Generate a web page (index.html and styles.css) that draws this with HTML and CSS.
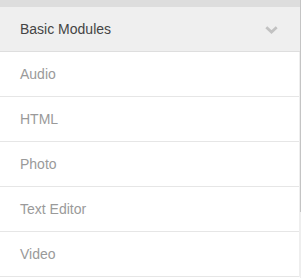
FILE: index.html
```html
<!DOCTYPE html>
<html lang="en">
<head>
    <meta charset="UTF-8">
    <title>Modules</title>
    <link rel="stylesheet" href="styles.css">
</head>
<body>
    <div class="sidebar">
        <div class="panel">
            <div class="panel-top"></div>
            <div class="group-header">
                <span>Basic Modules</span>
                <svg class="chevron" width="13" height="8" viewBox="0 0 13 8">
                    <path d="M1.3 1.2 L6.5 6 L11.7 1.2" fill="none" stroke="#c2c2c2" stroke-width="2.8"/>
                </svg>
            </div>
            <ul class="module-list">
                <li class="module-item">Audio</li>
                <li class="module-item">HTML</li>
                <li class="module-item">Photo</li>
                <li class="module-item">Text Editor</li>
                <li class="module-item">Video</li>
            </ul>
        </div>
        <div class="scrollbar">
            <div class="scroll-thumb"></div>
        </div>
    </div>
</body>
</html>
```

FILE: styles.css
```css
* {
    margin: 0;
    padding: 0;
    box-sizing: border-box;
}

body {
    font-family: 'Liberation Sans', Arial, sans-serif;
    font-size: 14px;
    background: #ffffff;
    overflow: hidden;
}

.sidebar {
    display: flex;
    width: 302px;
    height: 278px;
}

.panel {
    width: 300px;
}

.panel-top {
    height: 7px;
    background: #dddddd;
}

.group-header {
    display: flex;
    align-items: center;
    justify-content: space-between;
    height: 45px;
    padding: 0 22px 0 20px;
    background: #efefef;
    border-bottom: 1px solid #dedede;
    color: #444444;
    line-height: 44px;
}

.chevron {
    display: block;
    margin-top: 1px;
}

.module-list {
    list-style: none;
    border-right: 1px solid #eeeeee;
}

.module-item {
    height: 45px;
    padding-left: 20px;
    line-height: 44px;
    color: #9a9a9a;
    border-bottom: 1px solid #e6e6e6;
}

.scrollbar {
    width: 1px;
    background: #eeeeee;
}

.scroll-thumb {
    height: 212px;
    background: #c4c4c4;
}
```
